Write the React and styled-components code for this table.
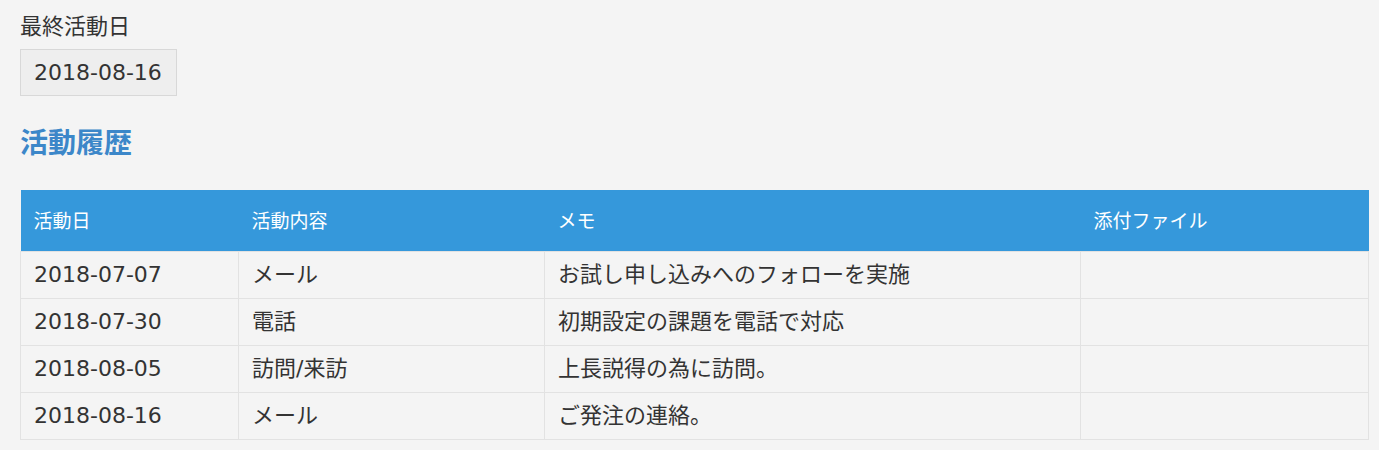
import React from "react";
import styled, { createGlobalStyle } from "styled-components";

const GlobalStyle = createGlobalStyle`
  body {
    margin: 0;
    background: #f4f4f4;
    color: #333;
    font-family: "DejaVu Sans", "Noto Sans CJK JP", sans-serif;
  }
`;

const activities = [
  { date: "2018-07-07", kind: "メール", memo: "お試し申し込みへのフォローを実施", file: "" },
  { date: "2018-07-30", kind: "電話", memo: "初期設定の課題を電話で対応", file: "" },
  { date: "2018-08-05", kind: "訪問/来訪", memo: "上長説得の為に訪問。", file: "" },
  { date: "2018-08-16", kind: "メール", memo: "ご発注の連絡。", file: "" },
];

const columns = [
  { label: "活動日", width: 218 },
  { label: "活動内容", width: 306 },
  { label: "メモ", width: 536 },
  { label: "添付ファイル", width: 288 },
];

const Page = styled.div`
  padding: 8px 11px 0 20px;
`;

const FieldLabel = styled.div`
  font-size: 22px;
  line-height: 33px;
  font-family: "Noto Sans CJK JP", sans-serif;
`;

const ValueBox = styled.div`
  display: inline-block;
  margin-top: 8px;
  padding: 0 14px 0 13px;
  height: 45px;
  line-height: 45px;
  font-size: 22px;
  background: #eeeeee;
  border: 1px solid #d8d8d8;
`;

const SectionTitle = styled.h2`
  margin: 24px 0 28px;
  font-size: 28px;
  line-height: 42px;
  font-weight: 700;
  color: #3c87c9;
  font-family: "Noto Sans CJK JP", sans-serif;
`;

const Table = styled.table`
  width: 1348px;
  border-collapse: collapse;
  table-layout: fixed;
`;

const HeadCell = styled.th`
  height: 61px;
  padding: 0 13px;
  text-align: left;
  font-weight: 400;
  font-size: 19px;
  line-height: 24px;
  color: #fff;
  background: #3598db;
  vertical-align: middle;
`;

const Cell = styled.td`
  height: 46px;
  padding: 0 13px;
  font-size: 22px;
  line-height: 26px;
  color: #333;
  border: 1px solid #e2e2e2;
  vertical-align: middle;
  white-space: nowrap;
`;

export default function App() {
  return (
    <Page>
      <GlobalStyle />
      <FieldLabel>最終活動日</FieldLabel>
      <ValueBox>2018-08-16</ValueBox>
      <SectionTitle>活動履歴</SectionTitle>
      <Table>
        <colgroup>
          {columns.map((c) => (
            <col key={c.label} style={{ width: c.width }} />
          ))}
        </colgroup>
        <thead>
          <tr>
            {columns.map((c) => (
              <HeadCell key={c.label}>{c.label}</HeadCell>
            ))}
          </tr>
        </thead>
        <tbody>
          {activities.map((a) => (
            <tr key={a.date}>
              <Cell>{a.date}</Cell>
              <Cell>{a.kind}</Cell>
              <Cell>{a.memo}</Cell>
              <Cell>{a.file}</Cell>
            </tr>
          ))}
        </tbody>
      </Table>
    </Page>
  );
}
